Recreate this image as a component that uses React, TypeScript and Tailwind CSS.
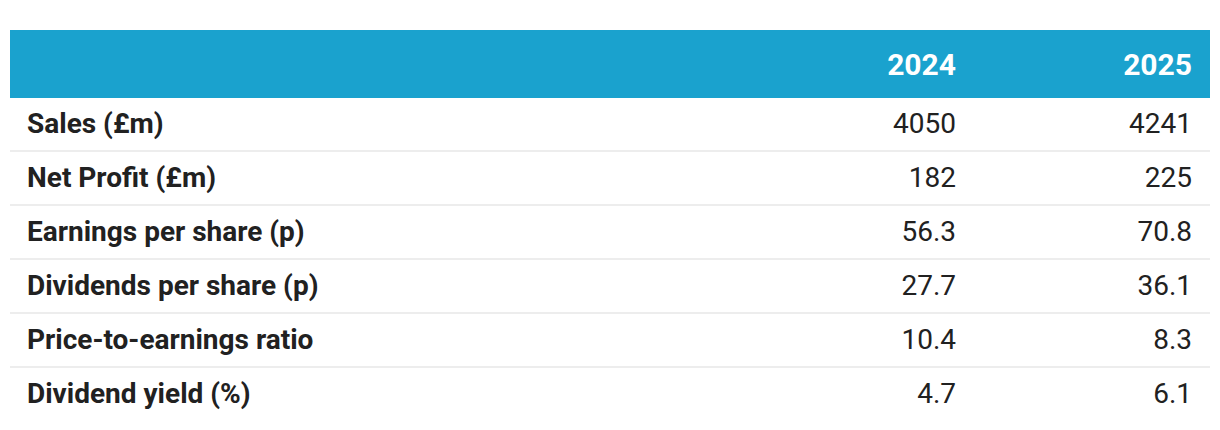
import React from "react";

// financial summary rows
const rows: { label: string; a: string; b: string }[] = [
  { label: "Sales (£m)", a: "4050", b: "4241" },
  { label: "Net Profit (£m)", a: "182", b: "225" },
  { label: "Earnings per share (p)", a: "56.3", b: "70.8" },
  { label: "Dividends per share (p)", a: "27.7", b: "36.1" },
  { label: "Price-to-earnings ratio", a: "10.4", b: "8.3" },
  { label: "Dividend yield (%)", a: "4.7", b: "6.1" },
];

const App = () => {
  return (
    <div className="w-[1220px] h-[430px] bg-white pt-[30px] px-[10px] font-['Roboto',sans-serif] text-[#212121]">
      <div className="grid grid-cols-[1fr_236px_236px] h-[68px] bg-[#1aa2ce] text-white font-bold text-[30px] items-center">
        <div />
        <div className="text-right pr-[18px]">2024</div>
        <div className="text-right pr-[18px]">2025</div>
      </div>
      {rows.map((r, i) => (
        <div
          key={r.label}
          className={`grid grid-cols-[1fr_236px_236px] h-[52px] items-center text-[28px] ${
            i < rows.length - 1 ? "border-b-2 border-[#ededed] box-content" : ""
          }`}
        >
          <div className="pl-[17px] font-bold">{r.label}</div>
          <div className="text-right pr-[18px]">{r.a}</div>
          <div className="text-right pr-[18px]">{r.b}</div>
        </div>
      ))}
    </div>
  );
};

export default App;
